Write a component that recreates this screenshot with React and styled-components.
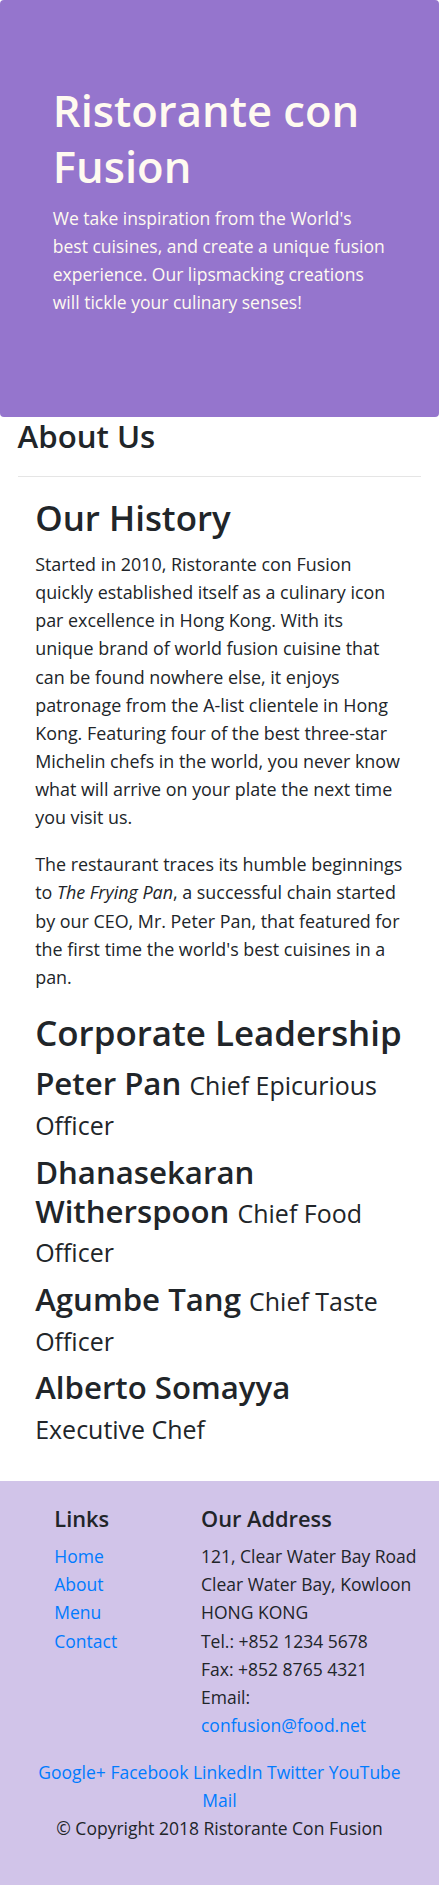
import React from 'react';
import styled, { createGlobalStyle } from 'styled-components';

const GlobalStyle = createGlobalStyle`
  * {
    box-sizing: border-box;
  }

  body {
    margin: 0;
    background: #fff;
    color: #212529;
    font-family: 'Open Sans', 'Liberation Sans', sans-serif;
    font-size: 17.5px;
    line-height: 28.16px;
  }
`;

const Page = styled.div`
  width: 439px;
`;

const Jumbotron = styled.header`
  background: #9575cd;
  color: floralwhite;
  border-radius: 4px;
  padding: 82px 48px 82px 52.8px;
`;

const Title = styled.h1`
  margin: 0 0 9.4px;
  font-size: 43.6px;
  line-height: 56.3px;
  font-weight: 600;
`;

const Lead = styled.p`
  margin: 0 0 18.8px;
`;

const Main = styled.main`
  padding: 0 17.6px;
`;

const PageTitle = styled.h3`
  margin: 0;
  font-size: 31.2px;
  line-height: 1.2635;
  font-weight: 600;
`;

const Rule = styled.hr`
  margin: 18.8px 0;
  border: 0;
  border-top: 1px solid rgba(0, 0, 0, 0.1);
`;

const Content = styled.section`
  padding: 0 35.2px 24.5px;
  font-size: 17.9px;
`;

const SectionTitle = styled.h2`
  margin: 0 0 9.4px;
  font-size: 34.9px;
  line-height: 45.06px;
  font-weight: 600;
`;

const Text = styled.p`
  margin: 0 0 18.8px;
`;

const Leader = styled.h3`
  margin: 0 0 9.4px;
  font-size: 31.2px;
  line-height: 1.2635;
  font-weight: 600;

  small {
    font-size: 80%;
    font-weight: 400;
  }
`;

const Footer = styled.footer`
  background: #d1c4e9;
  padding: 23.5px 0;
`;

const FooterColumns = styled.div`
  display: grid;
  grid-template-columns: 146.7px 1fr;
  align-items: start;
  padding: 0 17.6px 0 54.3px;
`;

const FooterTitle = styled.h5`
  margin: 0 0 9.4px;
  font-size: 21.8px;
  line-height: 28.16px;
  font-weight: 600;
`;

const LinkList = styled.ul`
  margin: 0 0 18.8px;
  padding: 0;
  list-style: none;
`;

const Link = styled.a`
  color: #007bff;
  text-decoration: none;
`;

const Address = styled.address`
  margin: 0 0 18.8px;
  font-style: normal;
`;

const Social = styled.div`
  padding: 0 21px;
  text-align: center;
`;

const Copyright = styled.p`
  margin: 0 0 18.8px;
  text-align: center;
`;

const leaders = [
  { name: 'Peter Pan', role: 'Chief Epicurious Officer' },
  { name: 'Dhanasekaran Witherspoon', role: 'Chief Food Officer' },
  { name: 'Agumbe Tang', role: 'Chief Taste Officer' },
  { name: 'Alberto Somayya', role: 'Executive Chef' },
];

const socials = ['Google+', 'Facebook', 'LinkedIn', 'Twitter', 'YouTube', 'Mail'];

export default function App() {
  return (
    <Page>
      <GlobalStyle />
      <Jumbotron>
        <Title>Ristorante con Fusion</Title>
        <Lead>
          We take inspiration from the World's best cuisines, and create a unique fusion
          experience. Our lipsmacking creations will tickle your culinary senses!
        </Lead>
      </Jumbotron>

      <Main>
        <PageTitle>About Us</PageTitle>
        <Rule />
      </Main>

      <Content>
        <SectionTitle>Our History</SectionTitle>
        <Text>
          Started in 2010, Ristorante con Fusion quickly established itself as a culinary icon
          par excellence in Hong Kong. With its unique brand of world fusion cuisine that can be
          found nowhere else, it enjoys patronage from the A-list clientele in Hong Kong.
          Featuring four of the best three-star Michelin chefs in the world, you never know what
          will arrive on your plate the next time you visit us.
        </Text>
        <Text>
          The restaurant traces its humble beginnings to <em>The Frying Pan</em>, a successful
          chain started by our CEO, Mr. Peter Pan, that featured for the first time the world's
          best cuisines in a pan.
        </Text>

        <SectionTitle>Corporate Leadership</SectionTitle>
        {leaders.map((l) => (
          <Leader key={l.name}>
            {l.name} <small>{l.role}</small>
          </Leader>
        ))}
      </Content>

      <Footer>
        <FooterColumns>
          <div>
            <FooterTitle>Links</FooterTitle>
            <LinkList>
              <li><Link href="#">Home</Link></li>
              <li><Link href="#">About</Link></li>
              <li><Link href="#">Menu</Link></li>
              <li><Link href="#">Contact</Link></li>
            </LinkList>
          </div>
          <div>
            <FooterTitle>Our Address</FooterTitle>
            <Address>
              121, Clear Water Bay Road<br />
              Clear Water Bay, Kowloon<br />
              HONG KONG<br />
              Tel.: +852 1234 5678<br />
              Fax: +852 8765 4321<br />
              Email:<br />
              <Link href="#">confusion@food.net</Link>
            </Address>
          </div>
        </FooterColumns>
        <Social>
          {socials.map((s, i) => (
            <React.Fragment key={s}>
              {i > 0 && ' '}
              <Link href="#">{s}</Link>
            </React.Fragment>
          ))}
        </Social>
        <Copyright>© Copyright 2018 Ristorante Con Fusion</Copyright>
      </Footer>
    </Page>
  );
}
